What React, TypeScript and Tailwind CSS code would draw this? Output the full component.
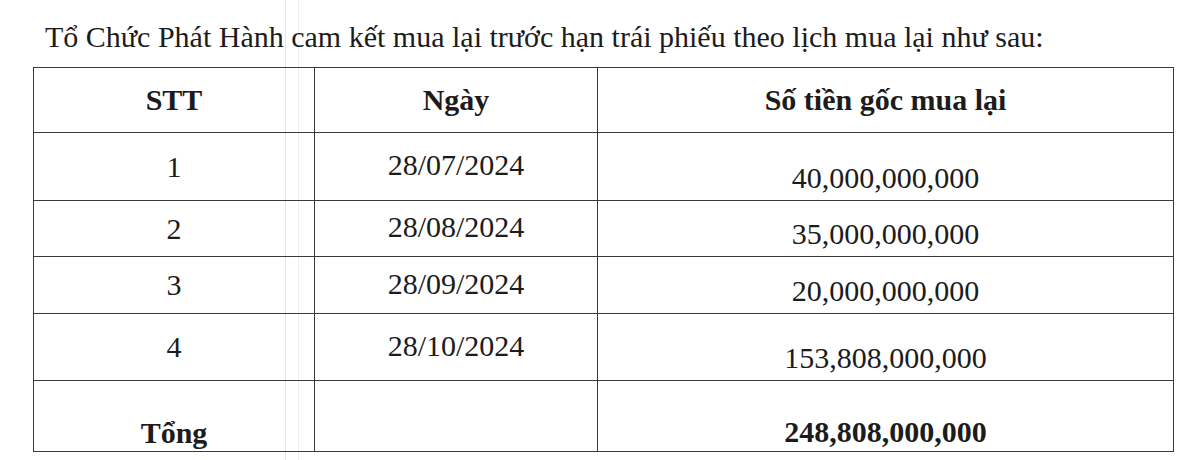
const rows = [
  { stt: '1', date: '28/07/2024', amount: '40,000,000,000', h: 'h-[68px]' },
  { stt: '2', date: '28/08/2024', amount: '35,000,000,000', h: 'h-[56px]' },
  { stt: '3', date: '28/09/2024', amount: '20,000,000,000', h: 'h-[57px]' },
  { stt: '4', date: '28/10/2024', amount: '153,808,000,000', h: 'h-[67px]' },
];

const cell = 'border border-[#3a3a3a] p-0 text-center';

export default function App() {
  return (
    <div
      className="relative h-[460px] w-[1200px] overflow-hidden bg-white text-[30px] leading-[34px] text-[#1c1c1c]"
      style={{ fontFamily: '"Liberation Serif", "Times New Roman", serif' }}
    >
      {/* faint scanner streaks */}
      <div className="pointer-events-none absolute left-[285px] top-0 h-full w-px bg-[#e6e6e6]" />
      <div className="pointer-events-none absolute left-[298px] top-0 h-full w-px bg-[#eeeeee]" />

      <div className="relative pl-[45px] pt-[20px]">
        Tổ Chức Phát Hành cam kết mua lại trước hạn trái phiếu theo lịch mua lại như sau:
      </div>

      <table className="relative ml-[33px] mt-[13px] w-[1140px] table-fixed border-collapse">
        <colgroup>
          <col className="w-[281px]" />
          <col className="w-[283px]" />
          <col className="w-[576px]" />
        </colgroup>
        <thead>
          <tr className="h-[65px] font-bold">
            <th className={`${cell} align-middle`}>STT</th>
            <th className={`${cell} align-middle`}>Ngày</th>
            <th className={`${cell} align-middle`}>Số tiền gốc mua lại</th>
          </tr>
        </thead>
        <tbody>
          {rows.map((r) => (
            <tr key={r.stt} className={r.h}>
              <td className={`${cell} align-middle`}>{r.stt}</td>
              <td className={`${cell} align-middle`}>
                <div className="pb-[3px]">{r.date}</div>
              </td>
              <td className={`${cell} align-bottom`}>
                <div className="pb-[5px]">{r.amount}</div>
              </td>
            </tr>
          ))}
          <tr className="h-[71px] font-bold">
            <td className={`${cell} align-bottom`}>
              <div className="pb-[1px]">Tổng</div>
            </td>
            <td className={cell} />
            <td className={`${cell} align-bottom`}>
              <div className="pb-[2px]">248,808,000,000</div>
            </td>
          </tr>
        </tbody>
      </table>
    </div>
  );
}
